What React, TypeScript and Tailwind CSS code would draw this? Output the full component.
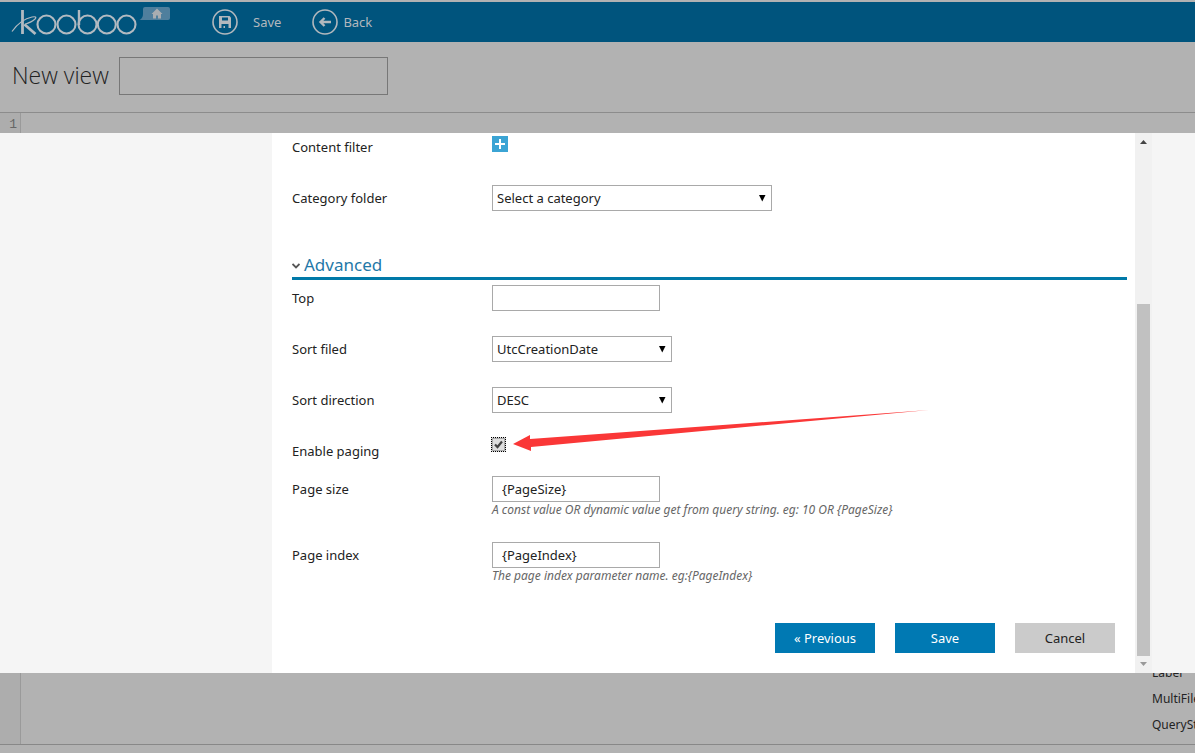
import React from "react";

const fieldBase =
  "h-[26px] border border-[#a9a9a9] bg-white text-[13px] text-[#222] outline-none";

function Row({
  label,
  id,
  className,
  children,
}: {
  label: string;
  id: string;
  className: string;
  children: React.ReactNode;
}) {
  return (
    <div className={`flex items-start ${className}`}>
      <label htmlFor={id} className="w-[200px] shrink-0 pt-[3px] leading-5">
        {label}
      </label>
      <div className="min-w-0 flex-1">{children}</div>
    </div>
  );
}

function Select({ id, value, className }: { id: string; value: string; className: string }) {
  return (
    <div className={`relative ${className}`}>
      <select id={id} defaultValue={value} className={`${fieldBase} w-full appearance-none pl-1 pr-6 pt-0.5`}>
        <option>{value}</option>
      </select>
      <svg viewBox="0 0 8 7" className="pointer-events-none absolute right-[6px] top-[10px] h-[7px] w-[8px]" fill="#000" aria-hidden="true">
        <path d="M1 0h6.500L4.250 6.500z" />
      </svg>
    </div>
  );
}

function Logo() {
  return (
    <svg viewBox="0 0 165 38" className="h-[38px] w-[165px]" fill="none" stroke="#b2bac1" strokeWidth="2.100" aria-label="kooboo" role="img">
      <path d="M14.500 7v24" strokeWidth="2.800" />
      <path d="M4 28.500Q13 16 24 14Q29.500 13 27 16Q24 19 16.500 21.500" strokeWidth="1.200" />
      <path d="M16.500 21.500L27.500 31" strokeWidth="2.800" />
      <circle cx="38.500" cy="21.500" r="9" />
      <circle cx="58.500" cy="21.500" r="9" />
      <path d="M71 7v15" strokeWidth="2.400" />
      <circle cx="79.500" cy="21.500" r="9" />
      <circle cx="98.800" cy="21.500" r="9" />
      <circle cx="118.500" cy="21.500" r="9" />
      <path d="M137 4h23a2 2 0 0 1 2 2v9a2 2 0 0 1-2 2h-28.500q3.500-2 3.500-6V6a2 2 0 0 1 2-2z" fill="#4f7f9d" stroke="none" />
      <path d="M149 5.500l5.500 5.500h-1.500v4.500h-3v-3h-2v3h-3V11h-1.500z" fill="#a9adb1" stroke="none" />
    </svg>
  );
}

export default function App() {
  return (
    <div className="flex min-h-screen flex-col overflow-x-hidden bg-[#b2b2b2] font-['Noto_Sans','Open_Sans',sans-serif] text-[13px] text-[#222]">
      <header className="flex h-[42px] shrink-0 items-center border-t-2 border-[#b2b2b2] bg-[#00547d] pl-2 text-[#b2b8bd]">
        <Logo />
        <nav className="ml-[39px] flex items-center gap-[31px]">
          <button type="button" className="flex items-center gap-[15px]">
            <svg viewBox="0 0 26 26" className="size-[26px]" fill="none" stroke="currentColor" strokeWidth="1.600" aria-hidden="true">
              <circle cx="13" cy="13" r="12" />
              <path d="M7 7h10.500L19 8.500V19H7z" fill="#b2b8bd" stroke="none" />
              <path d="M10 8.500h6v3h-6zM9.500 15h7v4H13v-2h-1.500v2H9.500z" fill="#00547d" stroke="none" />
            </svg>
            <span className="pt-0.5">Save</span>
          </button>
          <button type="button" className="flex items-center gap-[5px]">
            <svg viewBox="0 0 26 26" className="size-[26px]" fill="none" stroke="currentColor" strokeWidth="1.600" aria-hidden="true">
              <circle cx="13" cy="13" r="12" />
              <path d="M19 13H8.500M12.500 9L8.500 13l4 4" strokeWidth="2.400" />
            </svg>
            <span className="pt-0.5">Back</span>
          </button>
        </nav>
      </header>

      <div className="flex h-[70px] shrink-0 items-center gap-[10px] pb-0.5 pl-3">
        <label htmlFor="view-name" className="pb-0.5 font-['Open_Sans','Noto_Sans',sans-serif] text-[23px] font-light">
          New view
        </label>
        <input id="view-name" className="h-[38px] w-[269px] border border-[#777] bg-transparent px-2 outline-none" />
      </div>

      <div className="flex h-[21px] shrink-0 border-t border-[#8c8c8c]">
        <div className="flex w-[21px] items-center justify-end border-r border-[#9a9a9a] bg-[#adadad] pr-[3px] pt-[3px] font-['Liberation_Mono',monospace] text-[13px] text-[#666]">
          1
        </div>
      </div>

      <main className="flex shrink-0 bg-[#f5f5f5]">
        <div className="w-[272px] shrink-0" />
        <form className="min-w-0 flex-1 bg-white pb-5 pl-5 pr-2" onSubmit={(e) => e.preventDefault()}>
          <Row label="Content filter" id="content-filter" className="h-[52px] pt-px">
            <button id="content-filter" type="button" aria-label="Add filter" className="mt-0.5 flex size-4 items-center justify-center bg-[#3ba4d4]">
              <svg viewBox="0 0 10 10" className="size-[10px]" stroke="#fff" strokeWidth="2" aria-hidden="true">
                <path d="M5 0v10M0 5h10" />
              </svg>
            </button>
          </Row>
          <Row label="Category folder" id="category" className="h-[68px]">
            <Select id="category" value="Select a category" className="w-[280px]" />
          </Row>

          <h2 className="flex h-[27px] items-center border-b-[3px] border-[#0079a8] text-[17px] text-[#1f78a8]">
            <button type="button" className="flex items-center gap-1">
              <svg viewBox="0 0 8 8" className="mt-0.5 size-2" fill="none" stroke="#555" strokeWidth="1.800" aria-hidden="true">
                <path d="M0.500 2L4 5.500 7.500 2" />
              </svg>
              Advanced
            </button>
          </h2>

          <Row label="Top" id="top" className="h-[56px] pt-[5px]">
            <input id="top" className={`${fieldBase} w-[168px] px-[9px]`} />
          </Row>
          <Row label="Sort filed" id="sort-field" className="h-[51px]">
            <Select id="sort-field" value="UtcCreationDate" className="w-[180px]" />
          </Row>
          <Row label="Sort direction" id="sort-dir" className="h-[51px]">
            <Select id="sort-dir" value="DESC" className="w-[180px]" />
          </Row>
          <Row label="Enable paging" id="paging" className="h-[38px]">
            <div className="relative -mt-px flex">
              <input
                id="paging"
                type="checkbox"
                defaultChecked
                className="peer -ml-px size-[15px] appearance-none border border-dotted border-black bg-[#dedede] outline-none"
              />
              <svg viewBox="0 0 15 15" className="pointer-events-none absolute -left-px top-0 hidden size-[15px] peer-checked:block" fill="none" aria-hidden="true">
                <rect x="1.500" y="1.500" width="12" height="12" stroke="#aaa" />
                <path d="M4 7.500l2.500 2.500L11 4.500" stroke="#444" strokeWidth="2.200" />
              </svg>
              <svg viewBox="0 0 416 42" className="pointer-events-none absolute -top-[27px] left-[21px] h-[42px] w-[416px]" fill="#fa3737" aria-hidden="true">
                <path d="M0 34L17 25v4L416 0 18 37v4z" />
              </svg>
            </div>
          </Row>
          <Row label="Page size" id="page-size" className="h-[66px]">
            <input id="page-size" defaultValue="{PageSize}" className={`${fieldBase} block w-[168px] px-[9px]`} />
            <p className="text-[12px] italic leading-4 text-[#666]">
              A const value OR dynamic value get from query string. eg: 10 OR {"{PageSize}"}
            </p>
          </Row>
          <Row label="Page index" id="page-index" className="h-[81px]">
            <input id="page-index" defaultValue="{PageIndex}" className={`${fieldBase} block w-[168px] px-[9px]`} />
            <p className="text-[12px] italic leading-4 text-[#666]">
              The page index parameter name. eg:{"{PageIndex}"}
            </p>
          </Row>

          <div className="flex justify-end gap-5 pr-3">
            <button type="button" className="h-[30px] w-[100px] bg-[#0079b3] pt-0.5 text-white">« Previous</button>
            <button type="submit" className="h-[30px] w-[100px] bg-[#0079b3] pt-0.5 text-white">Save</button>
            <button type="button" className="h-[30px] w-[100px] bg-[#cbcbcb] pt-0.5">Cancel</button>
          </div>
        </form>
        <div className="flex w-[17px] shrink-0 flex-col items-center bg-[#f1f1f1]">
          <svg viewBox="0 0 17 17" className="size-[17px]" fill="#444" aria-hidden="true">
            <path d="M5 11l3.500-4L12 11z" />
          </svg>
          <div className="w-[13px] flex-1 pt-[154px]">
            <div className="h-full bg-[#c1c1c1]" />
          </div>
          <svg viewBox="0 0 17 17" className="size-[17px]" fill="#999" aria-hidden="true">
            <path d="M5 6l3.500 4L12 6z" />
          </svg>
        </div>
        <div className="w-[43px] shrink-0" />
      </main>

      <div className="flex h-[72px] shrink-0 overflow-hidden border-b border-[#888] text-[12px]">
        <div className="w-[21px] border-r border-[#9a9a9a] bg-[#adadad]" />
        <div className="flex-1" />
        <ul className="-mt-[13px] w-[43px] overflow-hidden whitespace-nowrap leading-[26px]">
          <li>Label</li>
          <li>MultiFiles</li>
          <li>QueryString</li>
        </ul>
      </div>
    </div>
  );
}
